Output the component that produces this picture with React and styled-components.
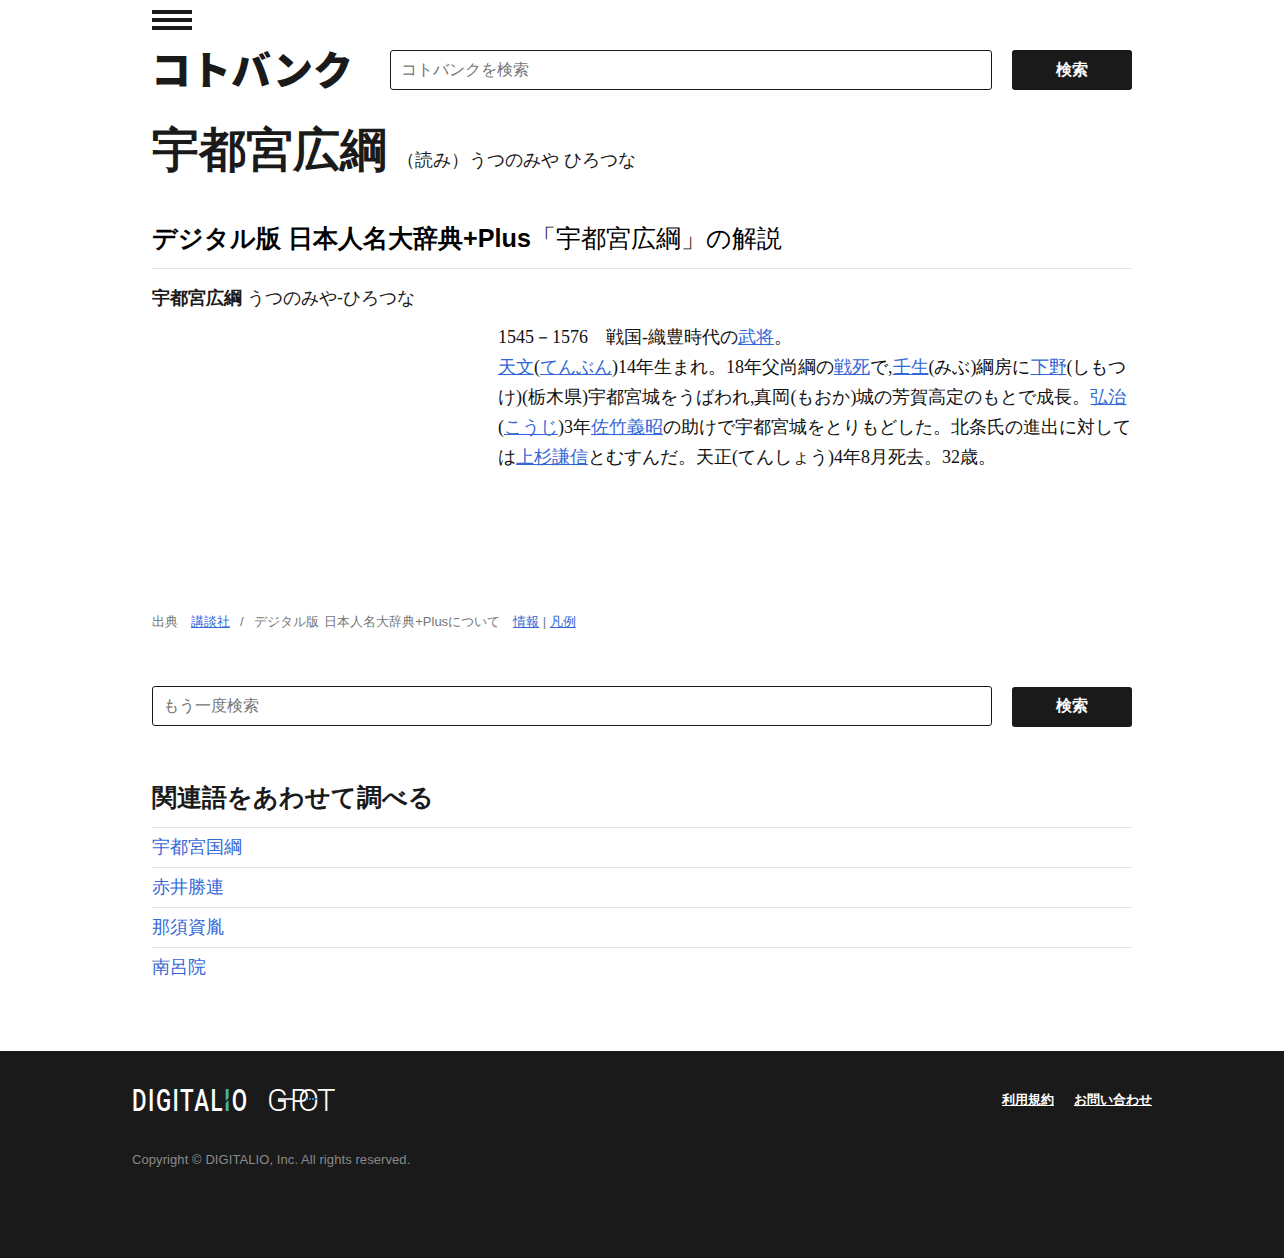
import React from "react";
import styled, { createGlobalStyle } from "styled-components";

const Global = createGlobalStyle`
  html, body { margin: 0; padding: 0; background: #fff; }
  body { font-family: "Liberation Sans", sans-serif; color: #1a1a1a; }
  a { color: #3367d6; }
`;
const Page = styled.div`display:flex;flex-direction:column;min-height:1258px;`;
const Main = styled.main`width:980px;margin:0 auto;flex:1;`;
const Burger = styled.div`display:flex;flex-direction:column;gap:4px;width:40px;padding-top:10px;`;
const BurgerBar = styled.span`display:block;height:4px;background:#1a1a1a;`;
const Head = styled.header`display:flex;align-items:center;margin-top:20px;height:40px;`;
const Logo = styled.div`width:238px;margin-left:-1px;padding-right:1px;height:40px;font:900 40px/36px "Noto Sans CJK JP",sans-serif;color:#1a1a1a;white-space:nowrap;`;
const SearchRow = styled.div`display:flex;gap:20px;align-items:${p=>p.$top?"flex-start":"center"};flex:1;margin-top:${p=>p.$mt||0}px;`;
const SearchInput = styled.input`flex:1;height:40px;box-sizing:border-box;border:1px solid #1a1a1a;border-radius:3px;padding:0 10px;font:16px "Liberation Sans",sans-serif;background:#fff;&::placeholder{color:#757575;opacity:1;}`;
const SearchButton = styled.button`width:120px;height:40px;border:0;border-radius:3px;background:#1a1a1a;color:#fff;font:700 16px "Liberation Sans",sans-serif;margin-top:${p=>p.$mt||0}px;padding:0 0 ${p=>p.$mt?2:0}px;`;
const Title = styled.div`display:flex;align-items:baseline;margin-top:30px;height:60px;`;
const H1 = styled.h1`margin:0;font-size:47px;line-height:60px;font-weight:700;`;
const Yomi = styled.span`font-size:18px;margin-left:10px;`;
const Section = styled.h2`margin:40px 0 0;padding-bottom:12px;border-bottom:1px solid #e5e5e5;font-size:25.2px;line-height:36px;font-weight:400;color:#000;`;
const Strong = styled.strong`font-weight:700;`;
const Entry = styled.div`font-size:18px;line-height:30px;margin-top:14px;`;
const Body = styled.div`margin:9px 0 0 346px;font:18px/30px "Liberation Serif",serif;color:#111;height:270px;`;
const Source = styled.div`font-size:13px;line-height:20px;color:#757575;white-space:pre;margin-top:20px;`;
const Slash = styled.span`margin:0 10px;`;
const DictName = styled.span`word-spacing:2px;`;
const Sep = styled.span`color:#6b7a90;`;
const H3 = styled.h3`margin:50px 0 0;font-size:25.2px;line-height:40px;font-weight:700;padding-bottom:10px;border-bottom:1px solid #e5e5e5;`;
const RelatedItem = styled.div`height:39px;line-height:38px;font-size:18px;border-bottom:${p=>p.$last?"0":"1px solid #e5e5e5"};a{text-decoration:none;}`;
const Footer = styled.footer`background:#1a1a1a;height:207px;`;
const FooterInner = styled.div`width:1020px;margin:0 auto;padding-top:36px;`;
const FooterTop = styled.div`display:flex;justify-content:space-between;align-items:center;height:26px;`;
const Brands = styled.div`display:flex;gap:20px;align-items:center;`;
const FootLinks = styled.div`display:flex;gap:20px;font-size:13px;font-weight:700;a{color:#fff;}`;
const Copy = styled.div`margin-top:37px;font-size:13px;line-height:20px;color:#8a8a8a;letter-spacing:.08px;`;

const related = ["宇都宮国綱","赤井勝連","那須資胤","南呂院"];

function DigitalioLogo(){
  return <svg width="115" height="26" viewBox="0 0 115 26" overflow="visible" role="img" aria-label="DIGITALIO">
    <g transform="scale(.72 1)">
      <text x="0" y="24" fontFamily="Roboto, sans-serif" fontWeight="500" fontSize="31" fill="#fff" textLength="160" lengthAdjust="spacing">DIGITAL<tspan fill="#46b3ad">I</tspan>O</text>
    </g>
    <path d="M93 15.5L98 11" stroke="#1a1a1a" strokeWidth="1.5"/>
  </svg>;
}
function GpotLogo(){
  return <svg width="66" height="26" viewBox="0 0 66 26" overflow="visible" role="img" aria-label="GPOT">
    <text x="0 23 31 50" y="24" fontFamily="Roboto, sans-serif" fontWeight="300" fontSize="31" fill="#fff">GPOT</text>
    <path d="M11 12H26" stroke="#fff" strokeWidth="1.6"/>
    <path d="M39 12H50" stroke="#3f8fc4" strokeWidth="2" strokeDasharray="2 1"/>
  </svg>;
}

export default function App(){
  return <Page><Global/>
    <Main>
      <Burger><BurgerBar/><BurgerBar/><BurgerBar/></Burger>
      <Head><Logo>コトバンク</Logo>
        <SearchRow><SearchInput placeholder="コトバンクを検索"/><SearchButton>検索</SearchButton></SearchRow>
      </Head>
      <Title><H1>宇都宮広綱</H1><Yomi>（読み）うつのみや ひろつな</Yomi></Title>
      <Section><Strong>デジタル版 日本人名大辞典+Plus</Strong>「宇都宮広綱」の解説</Section>
      <Entry><Strong>宇都宮広綱</Strong> うつのみや-ひろつな</Entry>
      <Body>
        1545－1576　戦国-織豊時代の<a href="#">武将</a>。<br/>
        <a href="#">天文</a>(<a href="#">てんぶん</a>)14年生まれ。18年父尚綱の<a href="#">戦死</a>で,<a href="#">壬生</a>(みぶ)綱房に<a href="#">下野</a>(しもつけ)(栃木県)宇都宮城をうばわれ,真岡(もおか)城の芳賀高定のもとで成長。<a href="#">弘治</a>(<a href="#">こうじ</a>)3年<a href="#">佐竹義昭</a>の助けで宇都宮城をとりもどした。北条氏の進出に対しては<a href="#">上杉謙信</a>とむすんだ。天正(てんしょう)4年8月死去。32歳。
      </Body>
      <Source>出典　<a href="#">講談社</a><Slash>/</Slash><DictName>デジタル版 日本人名大辞典+Plusについて</DictName>　<a href="#">情報</a> <Sep>|</Sep> <a href="#">凡例</a></Source>
      <SearchRow $top $mt={54}><SearchInput placeholder="もう一度検索"/><SearchButton $mt={1}>検索</SearchButton></SearchRow>
      <H3>関連語をあわせて調べる</H3>
      {related.map((r,i)=><RelatedItem key={r} $last={i===3}><a href="#">{r}</a></RelatedItem>)}
    </Main>
    <Footer><FooterInner>
      <FooterTop>
        <Brands><DigitalioLogo/><GpotLogo/></Brands>
        <FootLinks><a href="#">利用規約</a><a href="#">お問い合わせ</a></FootLinks>
      </FooterTop>
      <Copy>Copyright © DIGITALIO, Inc. All rights reserved.</Copy>
    </FooterInner></Footer>
  </Page>;
}
